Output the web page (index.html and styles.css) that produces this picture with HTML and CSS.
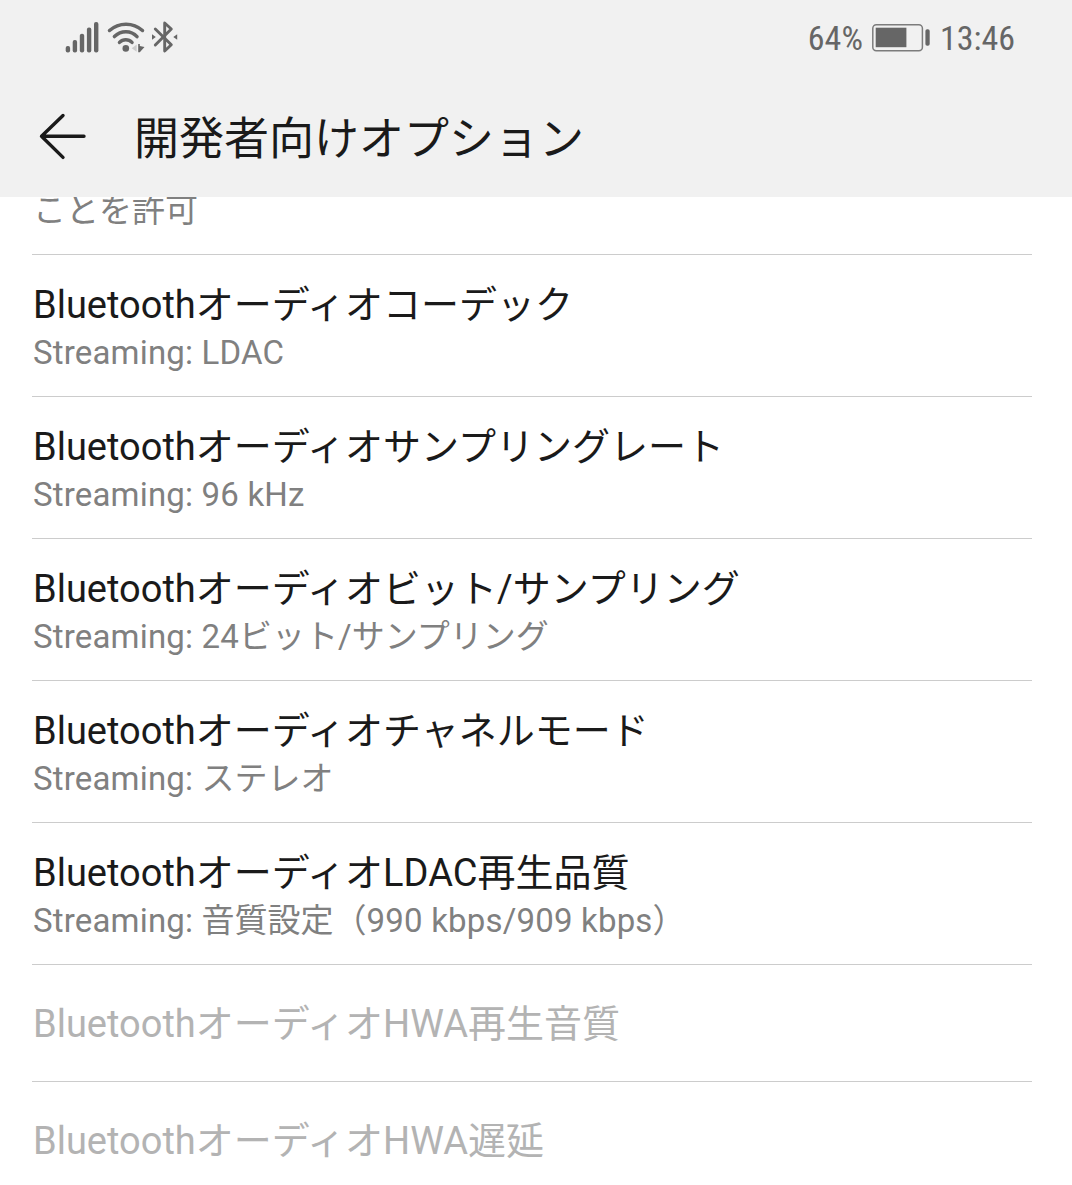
FILE: index.html
```html
<!DOCTYPE html>
<html lang="ja">
<head>
  <meta charset="UTF-8">
  <meta name="viewport" content="width=device-width, initial-scale=1.0">
  <title>開発者向けオプション</title>
  <link rel="stylesheet" href="styles.css">
</head>
<body>

  <!-- Status Bar + Title -->
  <header class="header">
    <div class="status-bar">
      <svg class="status-icons" width="116" height="40" viewBox="64 18 116 40">
        <!-- Signal -->
        <g fill="#666">
          <rect x="65.7" y="46" width="4.4" height="6.4" rx="2"/>
          <rect x="72.7" y="40" width="4.4" height="12.4" rx="2"/>
          <rect x="79.8" y="33.7" width="4.4" height="18.7" rx="2"/>
          <rect x="86.9" y="27.5" width="4.4" height="24.9" rx="2"/>
          <rect x="94" y="22" width="4.4" height="30.4" rx="2"/>
        </g>
        <!-- Wi-Fi -->
        <g fill="none" stroke="#666" stroke-width="3.5" stroke-linecap="round">
          <path d="M109.5 30.5C119 22 133 22 142.5 30.5"/>
          <path d="M114.4 36.6C121 30 131 30 137 36.6"/>
          <path d="M119.5 42.4C123 38.8 128.5 38.8 132 42.4"/>
        </g>
        <circle cx="125.8" cy="48.4" r="3.3" fill="#666"/>
        <path d="M131.7 48.3L136.7 44.5V51.8Z" fill="#ccc"/>
        <path d="M138.2 44H139.8V46L144.5 47L139.8 52.3H138.2Z" fill="#666"/>
        <!-- Bluetooth -->
        <path d="M155.3 29L171.3 44.8L164.7 51V23L171.3 29L155.3 45" fill="none" stroke="#666" stroke-width="2.9" stroke-linecap="round" stroke-linejoin="round"/>
        <path d="M152 34.3L155.8 37L152 39.7ZM177.2 34.3L173.3 37L177.2 39.7Z" fill="#666"/>
      </svg>
      <div class="status-right">
        <span>64%</span>
        <svg width="60" height="32" viewBox="872 22 60 32">
          <rect x="873.8" y="24.7" width="49.6" height="26" rx="3.5" fill="none" stroke="#7c7c7c" stroke-width="1.5"/>
          <rect x="876.7" y="27.7" width="30.7" height="19.5" fill="#666"/>
          <rect x="926.4" y="29.3" width="4.3" height="16.4" rx="1.8" fill="#666"/>
        </svg>
        <span>13:46</span>
      </div>
    </div>
    <div class="title-bar">
      <svg class="back" width="50" height="51" viewBox="37 111 50 51">
        <path d="M84 136.3H41.5M63 115.5L41.5 136.3L63 157.4" fill="none" stroke="#1a1a1a" stroke-width="3.4" stroke-linecap="round" stroke-linejoin="round"/>
      </svg>
      <h1>開発者向けオプション</h1>
    </div>
  </header>

  <!-- Settings List -->
  <main class="list">
    <div class="item partial"><p>ことを許可</p></div>
    <div class="item">
      <h2>Bluetoothオーディオコーデック</h2>
      <p><span class="latin">Streaming: LDAC</span></p>
    </div>
    <div class="item">
      <h2>Bluetoothオーディオサンプリングレート</h2>
      <p><span class="latin">Streaming: 96 kHz</span></p>
    </div>
    <div class="item">
      <h2>Bluetoothオーディオビット/サンプリング</h2>
      <p><span class="latin">Streaming: 24</span>ビット/サンプリング</p>
    </div>
    <div class="item">
      <h2>Bluetoothオーディオチャネルモード</h2>
      <p><span class="latin">Streaming: </span>ステレオ</p>
    </div>
    <div class="item">
      <h2>BluetoothオーディオLDAC再生品質</h2>
      <p><span class="latin">Streaming: </span>音質設定（<span class="latin">990 kbps/909 kbps</span>）</p>
    </div>
    <div class="item disabled">
      <h2>BluetoothオーディオHWA再生音質</h2>
    </div>
    <div class="item disabled">
      <h2>BluetoothオーディオHWA遅延</h2>
    </div>
  </main>

</body>
</html>
```
FILE: styles.css
```css
* { box-sizing: border-box; }
body { font-family: Roboto, "Noto Sans CJK JP", sans-serif; margin: 0; height: 1185px; overflow: hidden; background-color: #fff; color: #1a1a1a; }
h1, h2, p { margin: 0; font-weight: 400; white-space: nowrap; }
svg { display: block; }
.header { height: 197px; background-color: #f1f1f1; }
.status-bar { height: 76px; padding: 0 57px 0 64px; display: flex; align-items: center; justify-content: space-between; }
.status-right { display: flex; align-items: center; gap: 8.5px; font-family: "Roboto Condensed", Roboto, sans-serif; font-size: 34px; color: #666; }
.title-bar { height: 121px; padding-left: 37px; display: flex; align-items: center; }
.title-bar h1 { margin-left: 47px; padding-top: 7px; font-size: 45px; line-height: 60px; }
.list { padding: 0 40px 0 32px; }
.item { height: 142px; padding: 26px 0 0 1px; border-bottom: 1px solid #ccc; }
.item h2 { font-size: 38px; line-height: 48px; }
.item p { padding-top: 1px; font-size: 33px; line-height: 46px; color: #808080; }
.item .latin { letter-spacing: 0.18px; }
.partial { height: 58px; padding-top: 0; overflow: hidden; }
.partial p { margin-top: -10px; }
.disabled { height: 117px; padding-top: 35px; }
.disabled h2 { color: #b3b3b3; }
.disabled:last-child { border-bottom: 0; }
```
